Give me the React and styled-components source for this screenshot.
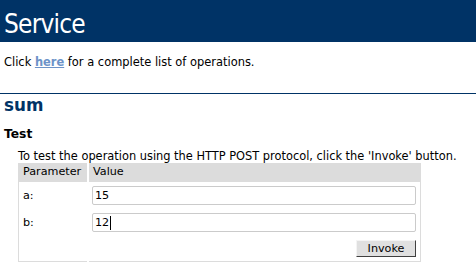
import React from "react";
import styled, { createGlobalStyle } from "styled-components";

const Global = createGlobalStyle`
  html, body { margin: 0; padding: 0; background: #fff; }
  body { font-family: "DejaVu Sans", Verdana, sans-serif; color: #000; }
`;

const Page = styled.div`
  width: 476px;
  height: 272px;
  overflow: hidden;
`;

const Banner = styled.h1`
  margin: 0;
  height: 30px;
  padding: 9px 0 3px 4px;
  background: #003366;
  color: #fff;
  font-family: "DejaVu Sans Condensed", "DejaVu Sans", sans-serif;
  font-stretch: condensed;
  font-weight: normal;
  font-size: 26px;
  line-height: 30px;
  letter-spacing: -0.8px;
`;

const Intro = styled.p`
  margin: 13px 0 0 4px;
  font-size: 11.45px;
  line-height: 14px;
`;

const Link = styled.a`
  color: #6d93c8;
  font-weight: bold;
  text-decoration: underline;
`;

const OpTitle = styled.h2`
  margin: 24px 0 0;
  border-top: 1px solid #003366;
  padding: 1px 0 0 4px;
  color: #003366;
  font-size: 16.8px;
  line-height: 20px;
  font-weight: bold;
`;

const SubTitle = styled.h3`
  margin: 12px 0 0 4px;
  font-size: 12.3px;
  line-height: 15px;
  font-weight: bold;
`;

const Section = styled.div`
  margin: 8px 0 0 18px;
  font-size: 11.2px;
`;

const Note = styled.p`
  margin: 0;
  font-size: 11.4px;
  line-height: 13px;
  white-space: nowrap;
`;

const Frame = styled.table`
  border-collapse: collapse;
  border: 1px solid #dcdcdc;
  width: 403px;
  font-size: 11.2px;
  table-layout: fixed;
`;

const HeadCell = styled.td`
  background: #dcdcdc;
  padding: 1px 4px 3px;
  line-height: 14px;
  border-right: ${(p) => (p.$first ? "2px solid #fff" : "0")};
  width: ${(p) => (p.$first ? "60px" : "auto")};
`;

const LabelCell = styled.td`
  padding: 4px 4px;
  line-height: 14px;
  vertical-align: middle;
  border-right: 2px solid #fff;
`;

const ValueCell = styled.td`
  padding: 4px 4px 4px 3px;
  text-align: ${(p) => (p.$right ? "right" : "left")};
  line-height: 0;
`;

const Field = styled.div`
  box-sizing: border-box;
  width: 324px;
  height: 19px;
  border: 1px solid #cbcbcb;
  border-radius: 2px;
  padding: 0 2px;
  font-size: 11.2px;
  line-height: 17px;
  display: flex;
  align-items: center;
  background: #fff;
`;

const Caret = styled.span`
  display: inline-block;
  width: 1px;
  height: 14px;
  background: #000;
  margin-left: 1px;
`;

const Button = styled.button`
  box-sizing: border-box;
  width: 60px;
  height: 17px;
  padding: 0;
  font-family: "DejaVu Sans", Verdana, sans-serif;
  font-size: 11.2px;
  line-height: 14px;
  color: #000;
  background: #e0e0e0;
  border: 1px solid;
  border-color: #f4f4f4 #404040 #404040 #f4f4f4;
  border-radius: 0;
`;

const rows = [
  { name: "a", value: "15" },
  { name: "b", value: "12", focused: true },
];

export default function App() {
  return (
    <Page>
      <Global />
      <Banner>Service</Banner>
      <Intro>
        Click <Link href="#">here</Link> for a complete list of operations.
      </Intro>
      <OpTitle>sum</OpTitle>
      <SubTitle>Test</SubTitle>
      <Section>
        <Note>To test the operation using the HTTP POST protocol, click the 'Invoke' button.</Note>
        <Frame>
          <tbody>
            <tr>
              <HeadCell $first>Parameter</HeadCell>
              <HeadCell>Value</HeadCell>
            </tr>
            {rows.map((r) => (
              <tr key={r.name}>
                <LabelCell>{r.name}:</LabelCell>
                <ValueCell>
                  <Field role="textbox">
                    <span>{r.value}</span>
                    {r.focused && <Caret />}
                  </Field>
                </ValueCell>
              </tr>
            ))}
            <tr>
              <LabelCell />
              <ValueCell $right>
                <Button type="button">Invoke</Button>
              </ValueCell>
            </tr>
          </tbody>
        </Frame>
      </Section>
    </Page>
  );
}
